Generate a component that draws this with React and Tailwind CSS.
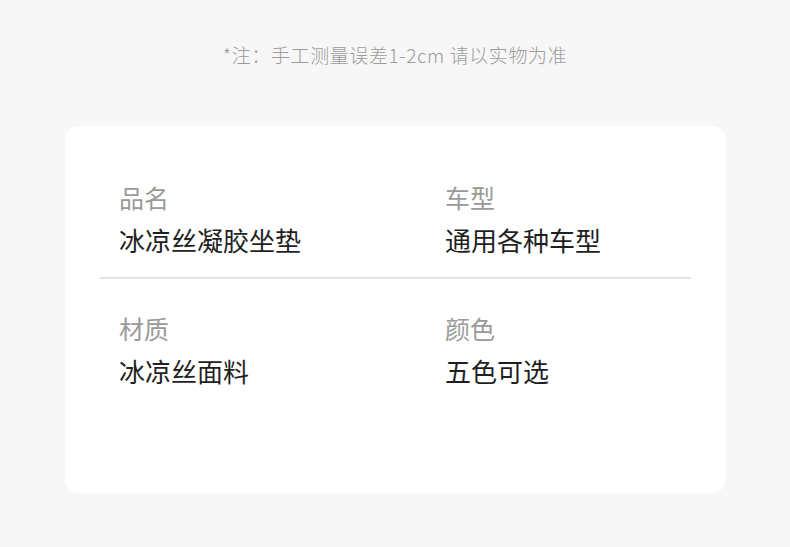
import React from 'react';

const font = { fontFamily: '"Noto Sans CJK SC", "Noto Sans", sans-serif' };

function Spec({ label, value }) {
  return (
    <div className="flex flex-col">
      <p className="text-[25px] leading-[30px] text-[#9a9a9a]">{label}</p>
      <p className="mt-[13px] text-[26px] leading-[30px] text-[#1f1f1f]">{value}</p>
    </div>
  );
}

export default function App() {
  return (
    <div className="w-[790px] h-[547px] bg-[#f7f7f7] overflow-hidden" style={font}>
      <p className="pt-[43px] text-center text-[19px] leading-[24px] font-light tracking-[0.6px] text-[#9c9c9c]">
        *注：手工测量误差1-2cm 请以实物为准
      </p>

      {/* Spec card */}
      <div className="ml-[65px] mt-[59px] w-[661px] h-[367px] rounded-[14px] bg-white px-[35px] pt-[56px]">
        <div className="grid grid-cols-[326px_1fr] pl-[19px]">
          <Spec label="品名" value="冰凉丝凝胶坐垫" />
          <Spec label="车型" value="通用各种车型" />
        </div>
        <div className="mt-[22px] h-[2px] bg-[#e3e3e3]" />
        <div className="mt-[34px] grid grid-cols-[326px_1fr] pl-[19px]">
          <Spec label="材质" value="冰凉丝面料" />
          <Spec label="颜色" value="五色可选" />
        </div>
      </div>
    </div>
  );
}
